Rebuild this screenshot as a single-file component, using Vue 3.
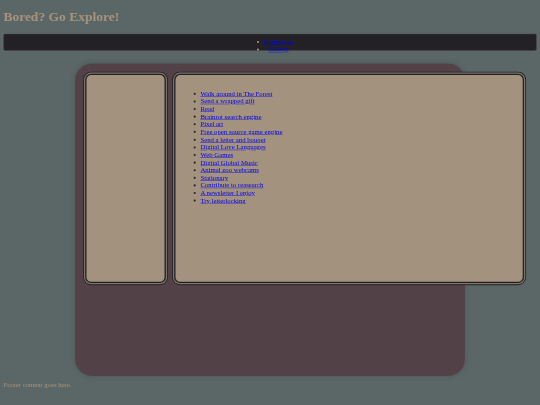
<script setup>
const links = [
  'Walk around in The Forest',
  'Send a wrapped gift',
  'Read',
  'Brainrot search engine',
  'Pixel art',
  'Free open source game engine',
  'Send a letter and bouqet',
  'Digital Love Languages',
  'Web Games',
  'Digital Global Music',
  'Animal zoo webcams',
  'Stationary',
  'Contribute to reasearch',
  'A newsletter I enjoy',
  'Try letterlocking'
]
</script>

<template>
  <div class="viewport">
    <div class="page">
      <div class="inner">
        <h1>Bored? Go Explore!</h1>
        <nav class="bar">
          <ul>
            <li><a href="#">Homepage</a></li>
            <li><a href="#">Gallery</a></li>
          </ul>
        </nav>
        <main class="panel">
          <aside class="card side"></aside>
          <section class="card content">
            <ul>
              <li v-for="l in links" :key="l"><a href="#">{{ l }}</a></li>
            </ul>
          </section>
        </main>
        <footer>Footer content goes here.</footer>
      </div>
    </div>
  </div>
</template>

<style>
body { background: #5b6767; }
</style>

<style scoped>
.viewport {
  width: 540px;
  height: 405px;
  overflow: hidden;
}
.page {
  width: 1280px;
  height: 960px;
  transform: scale(0.421875);
  transform-origin: 0 0;
}
.inner {
  height: 960px;
  padding: 0 8px;
  box-sizing: border-box;
  filter: blur(1.1px);
  font: 16px/18.1px "Liberation Serif", serif;
  color: #a8937a;
  background: #5b6767;
}
h1 {
  margin: 0;
  padding: 21px 0 22px;
  font-size: 32px;
  font-weight: bold;
  line-height: 37px;
}
.bar {
  height: 40px;
  box-sizing: border-box;
  background: #232125;
  border: 1px solid #4a4a4c;
  border-radius: 4px;
  display: flex;
  justify-content: center;
}
.bar ul {
  margin: 9px 0 0;
  padding: 0 0 0 40px;
  text-align: center;
  list-style: disc;
}
.bar a { color: #0000ee; }
.panel {
  width: 924px;
  height: 740px;
  box-sizing: border-box;
  margin: 31px 0 0 170px;
  padding: 24px;
  display: flex;
  align-items: flex-start;
  gap: 20px;
  background: #524247;
  border-radius: 40px;
  box-shadow: 0 0 10px rgba(50, 50, 50, 0.35);
}
.card {
  height: 496px;
  flex: none;
  box-sizing: border-box;
  background: #a3927e;
  border: 3px solid #232125;
  border-radius: 14px;
  box-shadow: 0 0 0 3px #7d736a, 0 0 0 5px #232125;
  color: #2a2628;
}
.side { width: 191px; }
.content {
  width: 829px;
  padding: 19px 19px;
}
.content ul {
  margin: 16px 0;
  padding-left: 40px;
  list-style: disc;
}
.content a { color: #0000ee; }
footer {
  margin-top: 13px;
}
</style>
